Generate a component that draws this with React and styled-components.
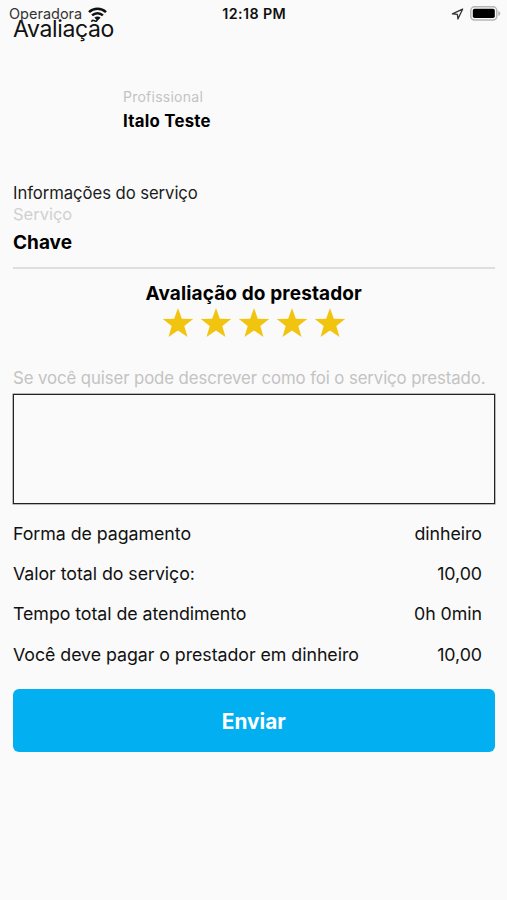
import { useState } from "react";
import styled, { createGlobalStyle } from "styled-components";

const GlobalStyle = createGlobalStyle`
  * {
    box-sizing: border-box;
  }

  body {
    margin: 0;
    background: #fafafa;
    font-family: Inter, "Liberation Sans", sans-serif;
    color: #111;
  }
`;

const Screen = styled.div`
  position: relative;
  width: 507px;
  height: 900px;
  overflow: hidden;
  background: #fafafa;
`;

// the status bar floats over the page title
const StatusBar = styled.div`
  position: absolute;
  top: 0;
  left: 0;
  width: 100%;
  height: 27px;
  padding: 0 6px 0 9px;
  display: grid;
  grid-template-columns: 1fr auto 1fr;
  align-items: center;
`;

const Carrier = styled.div`
  display: flex;
  align-items: center;
  gap: 6px;
  font-size: 14.5px;
  color: #333;
`;

const Clock = styled.div`
  margin-right: 1.5px;
  font-size: 14.3px;
  font-weight: 600;
  letter-spacing: 0.4px;
`;

const Indicators = styled.div`
  display: flex;
  justify-content: flex-end;
  align-items: center;
  gap: 6px;
`;

const Content = styled.main`
  display: flex;
  flex-direction: column;
  padding: 15px 12.5px 0 13px;
`;

const Title = styled.h1`
  margin: 0;
  font-size: 23px;
  font-weight: 400;
  line-height: 29px;
  letter-spacing: -0.35px;
`;

const Professional = styled.section`
  margin: 42px 0 0 110px;
`;

const Label = styled.div`
  font-size: ${(props) => props.$size}px;
  line-height: 21px;
  letter-spacing: ${(props) => props.$spacing || 0}px;
  color: ${(props) => props.$color || "#c3c3c3"};
  white-space: nowrap;
`;

const Name = styled.div`
  margin-top: 3px;
  font-size: 16.8px;
  font-weight: 700;
  line-height: 22px;
  letter-spacing: 0.25px;
  color: #000;
`;

const Service = styled.section`
  margin-top: 51px;
  padding-bottom: 12px;
  border-bottom: 2px solid #dedede;
`;

const ServiceName = styled.div`
  margin-top: 6px;
  font-size: 19px;
  font-weight: 700;
  line-height: 24px;
  color: #000;
`;

const Rating = styled.section`
  display: flex;
  flex-direction: column;
  align-items: center;
  margin-top: 13px;
`;

const RatingTitle = styled.h2`
  margin: 0;
  font-size: 19px;
  font-weight: 700;
  line-height: 24px;
  letter-spacing: 0.12px;
  color: #000;
`;

const Stars = styled.div`
  display: flex;
  gap: 6px;
  margin-top: 1px;
`;

const StarButton = styled.button`
  width: 32px;
  height: 32px;
  padding: 0;
  border: none;
  background: none;
`;

const Description = styled.section`
  margin-top: 29px;
`;

const TextBox = styled.textarea`
  display: block;
  width: 100%;
  height: 110px;
  margin-top: 5px;
  padding: 8px;
  border: 1px solid #222;
  box-shadow: 0 0 0 0.5px #777;
  background: transparent;
  font: inherit;
  resize: none;
  outline: none;
`;

const Summary = styled.dl`
  margin: 9px 0 0;
  padding-right: 12.5px;
`;

const SummaryRow = styled.div`
  display: flex;
  justify-content: space-between;
  align-items: center;
  height: 40.3px;
  font-size: 17.8px;
  letter-spacing: -0.05px;
`;

const Term = styled.dt`
  white-space: nowrap;
`;

const Value = styled.dd`
  margin: 0;
`;

const SubmitButton = styled.button`
  height: 63px;
  margin-top: 15.3px;
  padding: 1px 0 0;
  border: none;
  border-radius: 6px;
  background: #02aff0;
  color: #fff;
  font-family: inherit;
  font-size: 20.8px;
  font-weight: 700;
`;

const summary = [
  { term: "Forma de pagamento", value: "dinheiro" },
  { term: "Valor total do serviço:", value: "10,00" },
  { term: "Tempo total de atendimento", value: "0h 0min" },
  { term: "Você deve pagar o prestador em dinheiro", value: "10,00" },
];

function WifiIcon() {
  return (
    <svg width="19" height="14" viewBox="0 0 19 14" fill="none" stroke="#111" strokeWidth="2.5">
      <path d="M1 5.1a12.3 12.3 0 0 1 17 0" />
      <path d="M4.1 8.4a7.7 7.7 0 0 1 10.8 0" />
      <path d="M9.5 13.8 6.4 10.7a4.4 4.4 0 0 1 6.2 0z" fill="#111" stroke="none" />
    </svg>
  );
}

function LocationIcon() {
  return (
    <svg width="13" height="12" viewBox="0 0 13 12" fill="none" stroke="#333" strokeWidth="1.3" strokeLinejoin="round">
      <path d="M11.6 1.2 1.4 5.9l5 .4.5 4.7z" />
    </svg>
  );
}

function BatteryIcon() {
  return (
    <svg width="31" height="15" viewBox="0 0 31 15">
      <rect x="0.8" y="0.8" width="26" height="13.2" rx="3.8" fill="#fafafa" stroke="#b5b5b5" strokeWidth="1.5" />
      <rect x="2.8" y="2.8" width="22" height="9.2" rx="1.8" fill="#000" />
      <path d="M28.3 5v5c1.2-.5 2-1.4 2-2.5s-.8-2-2-2.5z" fill="#b5b5b5" />
    </svg>
  );
}

function Star({ filled }) {
  return (
    <svg width="32" height="32" viewBox="0 0 32 32" fill={filled ? "#f1c40f" : "#ddd"}>
      <path d="M16 1 19.8 11.8 31.2 12 22.3 19 25.5 30 16 23.6 6.5 30 9.7 19 .8 12 12.2 11.8z" />
    </svg>
  );
}

function App() {
  const [rating, setRating] = useState(5);
  const [comment, setComment] = useState("");

  return (
    <>
      <GlobalStyle />
      <Screen>
        <Content>
          <Title>Avaliação</Title>

          <Professional>
            <Label $size={14} $spacing={0.25}>Profissional</Label>
            <Name>Italo Teste</Name>
          </Professional>

          <Service>
            <Label $size={16.7} $spacing={-0.07} $color="#1c1c1c">Informações do serviço</Label>
            <Label $size={16.5} $color="#d0d0d0">Serviço</Label>
            <ServiceName>Chave</ServiceName>
          </Service>

          <Rating>
            <RatingTitle>Avaliação do prestador</RatingTitle>
            <Stars>
              {[1, 2, 3, 4, 5].map((n) => (
                <StarButton key={n} onClick={() => setRating(n)}>
                  <Star filled={n <= rating} />
                </StarButton>
              ))}
            </Stars>
          </Rating>

          <Description>
            <Label $size={16.8} $spacing={-0.1}>
              Se você quiser pode descrever como foi o serviço prestado.
            </Label>
            <TextBox value={comment} onChange={(e) => setComment(e.target.value)} />
          </Description>

          <Summary>
            {summary.map((item) => (
              <SummaryRow key={item.term}>
                <Term>{item.term}</Term>
                <Value>{item.value}</Value>
              </SummaryRow>
            ))}
          </Summary>

          <SubmitButton>Enviar</SubmitButton>
        </Content>

        <StatusBar>
          <Carrier>
            Operadora
            <WifiIcon />
          </Carrier>
          <Clock>12:18 PM</Clock>
          <Indicators>
            <LocationIcon />
            <BatteryIcon />
          </Indicators>
        </StatusBar>
      </Screen>
    </>
  );
}

export default App;
